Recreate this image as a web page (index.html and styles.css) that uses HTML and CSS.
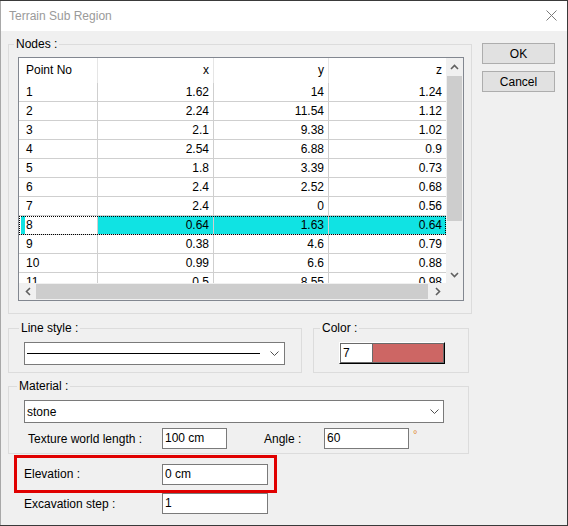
FILE: index.html
```html
<!DOCTYPE html>
<html lang="en">
<head>
  <meta charset="UTF-8">
  <title>Terrain Sub Region</title>
  <link rel="stylesheet" href="styles.css">
</head>
<body>
  <!-- dialog window -->
  <div class="window">
    <div class="titlebar">
      <span class="title">Terrain Sub Region</span>
      <svg class="close" width="11" height="11" viewBox="0 0 11 11">
        <path d="M0.5 0.5 L10.5 10.5 M10.5 0.5 L0.5 10.5" stroke="#7a7a7a" stroke-width="1" fill="none"/>
      </svg>
    </div>

    <div class="client">
      <div class="left">

        <!-- Nodes list -->
        <fieldset class="group nodes">
          <legend>Nodes :</legend>
          <div class="list">
            <div class="grid-view">
              <div class="row head">
                <div class="cell id">Point No</div><div class="cell">x</div><div class="cell">y</div><div class="cell">z</div>
              </div>
              <div class="row"><div class="cell id">1</div><div class="cell">1.62</div><div class="cell">14</div><div class="cell">1.24</div></div>
              <div class="row"><div class="cell id">2</div><div class="cell">2.24</div><div class="cell">11.54</div><div class="cell">1.12</div></div>
              <div class="row"><div class="cell id">3</div><div class="cell">2.1</div><div class="cell">9.38</div><div class="cell">1.02</div></div>
              <div class="row"><div class="cell id">4</div><div class="cell">2.54</div><div class="cell">6.88</div><div class="cell">0.9</div></div>
              <div class="row"><div class="cell id">5</div><div class="cell">1.8</div><div class="cell">3.39</div><div class="cell">0.73</div></div>
              <div class="row"><div class="cell id">6</div><div class="cell">2.4</div><div class="cell">2.52</div><div class="cell">0.68</div></div>
              <div class="row"><div class="cell id">7</div><div class="cell">2.4</div><div class="cell">0</div><div class="cell">0.56</div></div>
              <div class="row sel"><div class="cell id">8</div><div class="cell">0.64</div><div class="cell">1.63</div><div class="cell">0.64</div></div>
              <div class="row"><div class="cell id">9</div><div class="cell">0.38</div><div class="cell">4.6</div><div class="cell">0.79</div></div>
              <div class="row"><div class="cell id">10</div><div class="cell">0.99</div><div class="cell">6.6</div><div class="cell">0.88</div></div>
              <div class="row"><div class="cell id">11</div><div class="cell">0.5</div><div class="cell">8.55</div><div class="cell">0.98</div></div>
            </div>

            <div class="vscroll">
              <div class="arrow">
                <svg width="9" height="6" viewBox="0 0 9 6"><polyline points="1,5 4.5,1.5 8,5" fill="none" stroke="#606060" stroke-width="1.6"/></svg>
              </div>
              <div class="thumb"></div>
              <div class="arrow bottom">
                <svg width="9" height="6" viewBox="0 0 9 6"><polyline points="1,1 4.5,4.5 8,1" fill="none" stroke="#606060" stroke-width="1.6"/></svg>
              </div>
            </div>

            <div class="hscroll">
              <div class="arrow">
                <svg width="6" height="9" viewBox="0 0 6 9"><polyline points="5,1 1.5,4.5 5,8" fill="none" stroke="#606060" stroke-width="1.6"/></svg>
              </div>
              <div class="thumb"></div>
              <div class="arrow right">
                <svg width="6" height="9" viewBox="0 0 6 9"><polyline points="1,1 4.5,4.5 1,8" fill="none" stroke="#606060" stroke-width="1.6"/></svg>
              </div>
            </div>

            <div class="corner"></div>
          </div>
        </fieldset>

        <!-- line style + color -->
        <div class="pair">
          <fieldset class="group line-style">
            <legend>Line style :</legend>
            <div class="combo line-combo">
              <span class="line-sample"></span>
              <svg class="chev" width="9" height="5" viewBox="0 0 9 5"><polyline points="0.5,0.5 4.5,4.5 8.5,0.5" fill="none" stroke="#505050" stroke-width="1"/></svg>
            </div>
          </fieldset>
          <fieldset class="group color">
            <legend>Color :</legend>
            <div class="color-ctl">
              <div class="color-inner">
                <span class="color-num">7</span>
                <span class="color-swatch"></span>
              </div>
            </div>
          </fieldset>
        </div>

        <!-- material -->
        <fieldset class="group material">
          <legend>Material :</legend>
          <div class="combo stone-combo">
            <span class="combo-text">stone</span>
            <svg class="chev" width="9" height="5" viewBox="0 0 9 5"><polyline points="0.5,0.5 4.5,4.5 8.5,0.5" fill="none" stroke="#505050" stroke-width="1"/></svg>
          </div>
          <div class="texture-row">
            <span class="lbl tex-lbl">Texture world length :</span>
            <div class="txt tex-input">100 cm</div>
            <span class="lbl angle-lbl">Angle :</span>
            <div class="txt angle-input">60</div>
            <span class="deg">°</span>
          </div>
        </fieldset>

        <!-- highlighted elevation -->
        <div class="elev">
          <span class="lbl field-lbl">Elevation :</span>
          <div class="txt field-input">0 cm</div>
        </div>

        <div class="exc">
          <span class="lbl field-lbl">Excavation step :</span>
          <div class="txt field-input">1</div>
        </div>
      </div>

      <div class="buttons">
        <button class="btn">OK</button>
        <button class="btn">Cancel</button>
      </div>
    </div>
  </div>
</body>
</html>
```

FILE: styles.css
```css
* {
  box-sizing: border-box;
}

body {
  margin: 0;
  background: #3a3a3a;
  font-family: "Liberation Sans", Arial, sans-serif;
  font-size: 12px;
  color: #000;
}

/* ===== window frame ===== */
.window {
  width: 567px;
  height: 524px;
  margin-top: 1px;
  background: #f0f0f0;
  border-left: 1px solid #a8a8a8;
  display: flex;
  flex-direction: column;
}

.titlebar {
  height: 30px;
  flex: none;
  background: #fff;
  display: flex;
  align-items: center;
  justify-content: space-between;
  padding: 0 10px 0 8px;
}

.title {
  color: #9a9a9a;
  font-size: 12px;
}

.close {
  margin-top: -1px;
}

.client {
  display: flex;
  align-items: flex-start;
  padding-left: 7px;
}

.left {
  width: 464px;
}

/* ===== group boxes ===== */
.group {
  margin: 0;
  border: 1px solid #dcdcdc;
  min-width: 0;
}

legend {
  font-size: 12px;
  line-height: 14px;
  padding: 0 2px;
}

.nodes {
  margin-top: 6px;
  padding: 6px 7px 12px 9px;
}

.nodes legend { margin-left: -4px; }

/* ===== list view ===== */
.list {
  width: 446px;
  height: 244px;
  border: 1px solid #828790;
  background: #fff;
  display: grid;
  grid-template-columns: 427px 17px;
  grid-template-rows: 225px 17px;
}

.grid-view {
  overflow: hidden;
}

.row {
  display: grid;
  grid-template-columns: 79px 116px 115px 117px;
  height: 19px;
  border-bottom: 1px solid #cfcfcf;
}

.cell {
  border-right: 1px solid #cfcfcf;
  text-align: right;
  padding-right: 4px;
  line-height: 18px;
  white-space: nowrap;
  overflow: hidden;
}

.cell:last-child {
  border-right: 0;
}

.cell.id {
  text-align: left;
  padding-left: 7px;
}

.row.head {
  height: 25px;
  border-bottom: 0;
}

.row.head .cell {
  line-height: 25px;
  border-right-color: #e5e5e5;
}

.row.sel {
  outline: 1px dotted #000;
  outline-offset: -1px;
}

.row.sel .cell {
  background: #10e3e3;
}

.row.sel .cell.id {
  background: linear-gradient(to right, #fff 2px, #10e3e3 2px, #10e3e3 6px, #fff 6px);
}

/* scroll bars */
.vscroll,
.hscroll,
.corner {
  background: #f0f0f0;
}

.vscroll {
  display: flex;
  flex-direction: column;
}

.hscroll {
  display: flex;
}

.arrow {
  width: 17px;
  height: 17px;
  flex: none;
  display: flex;
  align-items: center;
  justify-content: center;
}

.vscroll .bottom { margin-top: auto; }
.hscroll .right { margin-left: auto; }

.vscroll .thumb {
  width: 15px;
  height: 145px;
  margin: 1px 0 0 1px;
  background: #cdcdcd;
}

.hscroll .thumb {
  width: 392px;
  height: 15px;
  margin-top: 1px;
  background: #cdcdcd;
}

/* ===== line style / color ===== */
.pair {
  display: flex;
  gap: 11px;
  margin-top: 7px;
  width: 461px;
}

.line-style {
  width: 294px;
  padding: 7px 0 7px 15px;
}

.line-style legend { margin-left: -5px; }

.color {
  width: 156px;
  padding: 7px 0 0 25px;
}

.color legend { margin-left: -19px; }

.combo {
  height: 23px;
  border: 1px solid #7a7a7a;
  background: #fff;
  display: flex;
  align-items: center;
}

.line-combo {
  width: 261px;
  padding-right: 5px;
}

.line-sample {
  width: 233px;
  height: 1px;
  margin-left: 2px;
  background: #000;
}

.chev {
  margin-left: auto;
}

.color-ctl {
  width: 106px;
  height: 22px;
  border: 1px solid;
  border-color: #fff #000 #000 #fff;
}

.color-inner {
  height: 100%;
  border: 1px solid #6a6a6a;
  display: flex;
}

.color-num {
  width: 31px;
  background: #fff;
  padding-left: 2px;
  line-height: 18px;
}

.color-swatch {
  flex: 1;
  background: #cd6664;
  border-left: 1px solid #6a6a6a;
}

/* ===== material ===== */
.material {
  margin-top: 6px;
  width: 461px;
  padding: 7px 0 4px 15px;
}

.material legend { margin-left: -7px; }

.stone-combo {
  width: 420px;
  padding: 0 4px 0 2px;
}

.texture-row {
  display: flex;
  align-items: center;
  margin-top: 5px;
  height: 21px;
}

.txt {
  height: 21px;
  border: 1px solid #7a7a7a;
  background: #fff;
  padding-left: 2px;
  line-height: 19px;
}

.tex-lbl {
  width: 134px;
  margin-left: 4px;
}

.tex-input { width: 65px; }

.angle-lbl {
  width: 60px;
  margin-left: 37px;
}

.angle-input { width: 85px; }

.deg {
  align-self: flex-start;
  margin-left: 4px;
  color: #e08a30;
  font-size: 11px;
  line-height: 12px;
}

/* ===== elevation / excavation ===== */
.elev {
  margin: 1px 0 0 6px;
  width: 263px;
  height: 38px;
  border: 3px solid #e00000;
  display: flex;
  align-items: center;
  padding-left: 7px;
}

.exc {
  display: flex;
  align-items: center;
  padding-left: 16px;
}

.field-lbl { width: 138px; }
.field-input { width: 106px; }

/* ===== OK / Cancel ===== */
.buttons {
  margin: 12px 0 0 10px;
  display: flex;
  flex-direction: column;
  gap: 7px;
}

.btn {
  width: 73px;
  height: 21px;
  padding: 0;
  background: #e1e1e1;
  border: 1px solid #adadad;
  font-family: "Liberation Sans", Arial, sans-serif;
  font-size: 12px;
  color: #000;
}
```
